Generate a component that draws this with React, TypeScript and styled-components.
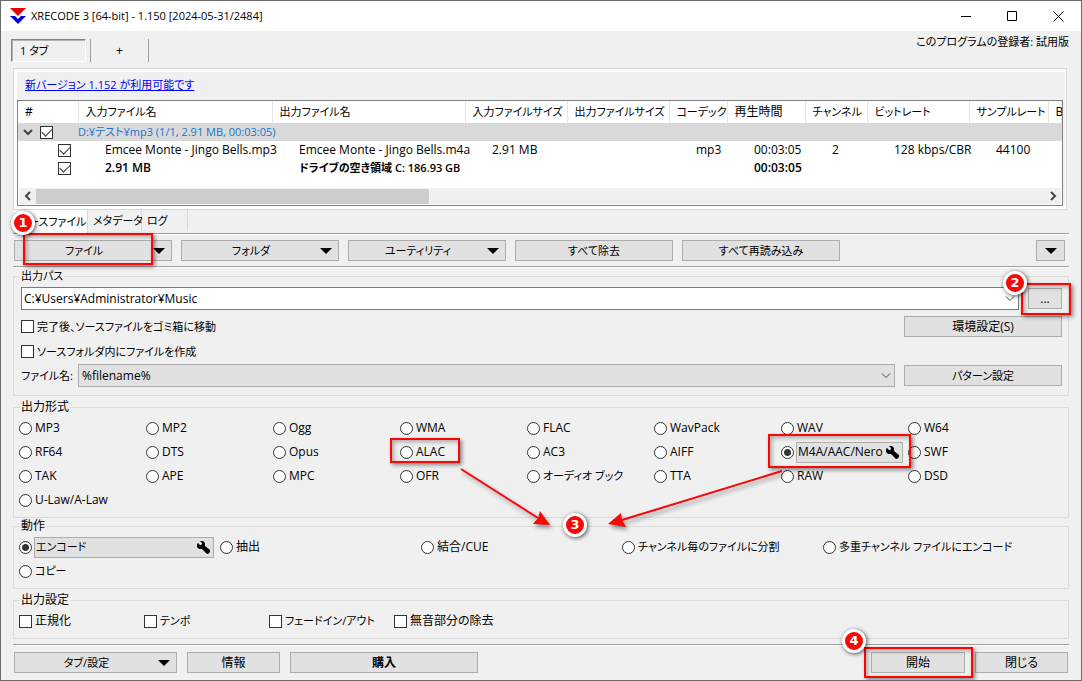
import React from 'react';
import styled, { createGlobalStyle, css } from 'styled-components';

const GlobalStyle = createGlobalStyle`
  * { box-sizing: border-box; }
  body {
    margin: 0;
    background: #f0f0f0;
    color: #000;
    font: 12px/16px "Open Sans", "Noto Sans CJK JP", sans-serif;
    font-feature-settings: "palt";
  }
  button, input, select { font: inherit; font-feature-settings: inherit; color: inherit; }
`;

const Window = styled.div`
  position: relative;
  display: flex;
  flex-direction: column;
  min-height: 100vh;
  border: 1px solid #6b6b6b;
  background: #f0f0f0;
  white-space: nowrap;
  overflow: hidden;
`;

const TitleBar = styled.header`
  display: flex;
  align-items: center;
  height: 30px;
  padding-left: 9px;
  background: #fff;
`;

const Title = styled.h1`
  flex: 1;
  margin: 0 0 0 5px;
  font-size: 11px;
  font-weight: 400;
`;

const CaptionButton = styled.button`
  display: grid;
  place-items: center;
  width: 46px;
  height: 30px;
  padding: 0;
  border: 0;
  background: none;
`;

const Compact = styled.span`
  font-size: 11px;
`;

const TabRow = styled.div`
  display: flex;
  align-items: flex-start;
  height: 37px;
  padding: 0 12px 0 10px;
`;

const TopTab = styled.button<{ $active?: boolean }>`
  width: ${p => (p.$active ? 75 : 59)}px;
  height: 23px;
  margin-top: 8px;
  padding: 0 8px;
  background: none;
  ${p => p.$active
    ? css`
        margin-right: 4px;
        text-align: left;
        border: 1px solid;
        border-color: #828282 #fff #fff #828282;
        box-shadow: inset 1px 1px #b4b4b4;
      `
    : css`
        border: solid #a0a0a0;
        border-width: 0 1px;
      `}
`;

const Registration = styled.span`
  margin: 3px 0 0 auto;
`;

const Panel = styled.section`
  margin: 0 14px 0 12px;
  padding: 3px 1px 3px 3px;
  border: 1px solid #d9d9d9;
  background: #fff;
`;

const PanelInner = styled.div`
  padding-right: 2px;
  background: #f0f0f0;
`;

const Notice = styled.div`
  height: 28px;
  padding: 5px 8px 0;
  a { color: #00f; }
`;

const ListBox = styled.div`
  height: 106px;
  border: 1px solid #828282;
  background: #fff;
  display: flex;
  flex-direction: column;
  justify-content: space-between;
  overflow: hidden;
`;

const Table = styled.table`
  width: 100%;
  table-layout: fixed;
  border-collapse: collapse;
  th, td {
    padding: 0;
    text-align: left;
    font-weight: inherit;
  }
  th {
    height: 22px;
    padding-left: 7px;
    border-right: 1px solid #e5e5e5;
  }
  td { height: 18px; padding-left: 27px; }
`;

const FileRow = styled.tr<{ $folder?: boolean; $total?: boolean }>`
  font-weight: ${p => (p.$total ? 600 : 400)};
  ${p => p.$folder && css`
    background: #d9d9d9;
    color: #1874cd;
  `}
  td:first-child { padding-left: 0; }
  ${p => p.$folder && css`td { padding-left: 0; }`}
`;

const CheckCell = styled.div<{ $indent?: boolean }>`
  display: flex;
  align-items: center;
  gap: 7px;
  padding-left: ${p => (p.$indent ? 40 : 5)}px;
`;

const Scrollbar = styled.div`
  display: flex;
  align-items: center;
  height: 16px;
  margin: 0 1px 1px;
  background: #f0f0f0;
`;

const ScrollArrow = styled.span`
  display: grid;
  place-items: center;
  width: 17px;
`;

const ScrollTrack = styled.div`
  flex: 1;
  height: 15px;
`;

const ScrollThumb = styled.div`
  width: 39%;
  height: 15px;
  background: #cdcdcd;
`;

const SheetTabs = styled.div`
  display: flex;
  align-items: flex-start;
  height: 23px;
  padding-left: 13px;
`;

const SheetTab = styled.button<{ $active?: boolean; $w: number }>`
  width: ${p => p.$w}px;
  height: ${p => (p.$active ? 23 : 21)}px;
  padding: 0 5px;
  border: solid #d9d9d9;
  border-width: 0 1px 0 0;
  background: ${p => (p.$active ? '#fff' : '#f0f0f0')};
  text-align: ${p => (p.$active ? 'right' : 'left')};
`;

const Rule = styled.hr`
  margin: 0 12px;
  border: solid;
  border-width: 1px 0;
  border-color: #a0a0a0 #fff #fff;
`;

const Bar = styled.div`
  display: flex;
  align-items: flex-start;
`;

const Toolbar = styled(Bar)`
  gap: 9px;
  height: 31px;
  padding: 5px 16px 0 13px;
`;

const BottomArea = styled.footer`
  margin-top: auto;
`;

const FooterBar = styled(Bar)`
  gap: 10px;
  padding: 6px 13px 7px;
`;

const Push = styled.div`
  margin-left: auto;
`;

const Button = styled.button<{ $w: number; $bold?: boolean }>`
  position: relative;
  display: flex;
  align-items: center;
  justify-content: center;
  width: ${p => p.$w}px;
  height: 21px;
  padding: 0;
  border: 1px solid #adadad;
  background: #e1e1e1;
  font-weight: ${p => (p.$bold ? 600 : 400)};
`;

const MenuButton = styled(Button)`
  padding-right: 18px;
`;

const Triangle = styled.i<{ $center?: boolean }>`
  border: solid transparent;
  border-width: 6px 6px 0;
  border-top-color: #000;
  ${p => !p.$center && css`
    position: absolute;
    right: 6px;
    top: 7px;
  `}
`;

const Group = styled.fieldset`
  position: relative;
  min-width: 0;
  margin: 0 12px;
  padding: 0 5px 5px;
  border: 1px solid #dcdcdc;
`;

const SpacedGroup = styled(Group)`
  margin-top: 3px;
`;

const Legend = styled.legend`
  height: 17px;
  margin-left: 1px;
  padding: 0 1px;
`;

const FormRow = styled.div<{ $top: number; $tall?: boolean }>`
  display: flex;
  align-items: center;
  justify-content: space-between;
  gap: 9px;
  height: ${p => (p.$tall ? 23 : 21)}px;
  margin: ${p => p.$top}px 0 0 2px;
`;

const FieldLabel = styled.label`
  width: 48px;
`;

const PathGroup = styled(Group)`
  padding-bottom: 8px;
`;

const ComboBox = styled.div`
  position: relative;
  flex: 1;
  display: flex;
  height: 23px;
`;

const PathInput = styled.input`
  flex: 1;
  height: 23px;
  padding: 0 24px 1px 2px;
  border: 1px solid #7a7a7a;
  background: #fff;
`;

const PatternSelect = styled.select`
  flex: 1;
  height: 23px;
  padding: 0 24px 0 3px;
  border: 1px solid #adadad;
  border-radius: 0;
  background: #e1e1e1;
  appearance: none;
`;

const ComboArrow = styled.svg`
  position: absolute;
  right: 4px;
  top: 9px;
  pointer-events: none;
`;

const BrowseSlot = styled.div`
  position: relative;
  margin-right: 1px;
`;

const RightButton = styled(Button)`
  margin-right: 1px;
`;

const OptionGrid = styled.div<{ $cols: number; $w: number }>`
  display: grid;
  grid-template-columns: repeat(${p => p.$cols}, minmax(0, ${p => p.$w}px));
  grid-auto-rows: 24px;
`;

const OptionCell = styled.div`
  position: relative;
  display: flex;
  align-items: center;
  gap: 2px;
`;

const Option = styled.label`
  display: flex;
  align-items: center;
  gap: 3px;
`;

const Check = styled.input.attrs({ type: 'checkbox' })`
  appearance: none;
  flex: none;
  width: 13px;
  height: 13px;
  margin: 0;
  border: 1px solid #333;
  background: #fff;
  display: grid;
  place-items: center;
  &:checked::before {
    content: "";
    width: 9px;
    height: 5px;
    margin-top: -2px;
    border: solid #333;
    border-width: 0 0 1px 1px;
    rotate: -45deg;
  }
`;

const Radio = styled.input.attrs({ type: 'radio' })`
  appearance: none;
  flex: none;
  width: 13px;
  height: 13px;
  margin: 0;
  border: 1px solid #333;
  border-radius: 50%;
  background: #fff;
  &:checked { background: radial-gradient(circle, #333 3px, #fff 4px); }
`;

const ToolButton = styled.button<{ $w: number }>`
  display: flex;
  align-items: center;
  justify-content: space-between;
  width: ${p => p.$w}px;
  height: 21px;
  padding: 0 3px 0 1px;
  border: 1px solid #adadad;
  background: #e1e1e1;
`;

const Anchor = styled.div`
  position: relative;
`;

const Highlight = styled.div<{ $inset: string }>`
  position: absolute;
  inset: ${p => p.$inset};
  z-index: 2;
  border: 2px solid #fb0505;
  box-shadow: 2px 2px 4px rgba(0, 0, 0, 0.45), inset 2px 2px 4px rgba(0, 0, 0, 0.3);
  pointer-events: none;
`;

const Badge = styled.span<{ $x: number; $y: number }>`
  position: absolute;
  left: ${p => p.$x}px;
  top: ${p => p.$y}px;
  z-index: 3;
  display: grid;
  place-items: center;
  width: 24px;
  height: 24px;
  border: 3px solid #fff;
  border-radius: 50%;
  background: #fb0505;
  box-shadow: 1px 1px 4px rgba(0, 0, 0, 0.7);
  color: #fff;
  font: 700 13px/18px "DejaVu Sans", sans-serif;
`;

const Arrows = styled.svg`
  position: absolute;
  left: 0;
  top: 0;
  z-index: 2;
  overflow: visible;
  pointer-events: none;
  filter: drop-shadow(2px 3px 2px rgba(0, 0, 0, 0.4));
`;

const Wrench = () => (
  <svg width="14" height="14" viewBox="0 0 14 14" aria-hidden="true">
    <path d="M4 1h3l2 2v3l5 4v2l-2 2h-1L6 9H3L1 7V4l1-1 2 2h1l1-1V3z" fill="#000" />
  </svg>
);

const Chevron = ({ d }: { d: string }) => (
  <svg width="10" height="10" viewBox="0 0 10 10" fill="none" stroke="#444" strokeWidth="2" aria-hidden="true">
    <path d={d} />
  </svg>
);

const DownArrow = () => (
  <ComboArrow width="10" height="6" viewBox="0 0 10 6" fill="none" stroke="#444">
    <path d="M1 .5l4 4 4-4" />
  </ComboArrow>
);

const mostlyKana = /[ァ-ヺ]|[ぁ-ん].*[ぁ-ん].*[ぁ-ん]/;

const Text = ({ children }: { children: string }) =>
  mostlyKana.test(children) ? <Compact>{children}</Compact> : <span>{children}</span>;

const columns: [string, number?][] = [
  ['#', 60], ['入力ファイル名', 194], ['出力ファイル名', 193], ['入力ファイルサイズ', 102],
  ['出力ファイルサイズ', 102], ['コーデック', 58], ['再生時間', 78], ['チャンネル', 62],
  ['ビットレート', 102], ['サンプルレート', 79], ['B'],
];

const files = [
  { id: 'track', cells: ['Emcee Monte - Jingo Bells.mp3', 'Emcee Monte - Jingo Bells.m4a', '2.91 MB', '', 'mp3', '00:03:05', '2', '128 kbps/CBR', '44100', ''] },
  { id: 'total', total: true, cells: ['2.91 MB', 'ドライブの空き領域 C: 186.93 GB', '', '', '', '00:03:05', '', '', '', ''] },
];

const formats = [
  'MP3', 'MP2', 'Ogg', 'WMA', 'FLAC', 'WavPack', 'WAV', 'W64',
  'RF64', 'DTS', 'Opus', 'ALAC', 'AC3', 'AIFF', 'M4A/AAC/Nero', 'SWF',
  'TAK', 'APE', 'MPC', 'OFR', 'オーディオ ブック', 'TTA', 'RAW', 'DSD', 'U-Law/A-Law',
];

const actions = ['エンコード', '抽出', '結合/CUE', 'チャンネル毎のファイルに分割', '多重チャンネル ファイルにエンコード', 'コピー'];
const effects = ['正規化', 'テンポ', 'フェードイン/アウト', '無音部分の除去'];

function FileTable() {
  return (
    <Table>
      <colgroup>
        {columns.map(([name, w]) => <col key={name} width={w} />)}
      </colgroup>
      <thead>
        <tr>{columns.map(([name]) => <th key={name} scope="col"><Text>{name}</Text></th>)}</tr>
      </thead>
      <tbody>
        <FileRow $folder>
          <td>
            <CheckCell>
              <Chevron d="M1 3l4 4 4-4" />
              <Check defaultChecked aria-label="D:¥テスト¥mp3" />
            </CheckCell>
          </td>
          <td colSpan={10}><Text>D:¥テスト¥mp3 (1/1, 2.91 MB, 00:03:05)</Text></td>
        </FileRow>
        {files.map(f => (
          <FileRow key={f.id} $total={f.total}>
            <td><CheckCell $indent><Check defaultChecked aria-label={f.cells[0]} /></CheckCell></td>
            {f.cells.map((c, i) => <td key={i}><Text>{c}</Text></td>)}
          </FileRow>
        ))}
      </tbody>
    </Table>
  );
}

export default function App() {
  return (
    <Window>
      <GlobalStyle />
      <TitleBar>
        <svg width="16" height="16" viewBox="0 0 16 16" aria-hidden="true">
          <path d="M0 0h16L8 8z" fill="#e60000" />
          <path d="M0 8h5l3 3 3-3h5l-8 8z" fill="#0000e0" />
        </svg>
        <Title>XRECODE 3 [64-bit] - 1.150 [2024-05-31/2484]</Title>
        <CaptionButton aria-label="最小化">
          <svg width="11" height="11" stroke="#000" fill="none"><path d="M0 5.500h10" /></svg>
        </CaptionButton>
        <CaptionButton aria-label="最大化">
          <svg width="11" height="11" stroke="#000" fill="none"><path d="M.5.5h9v9h-9z" /></svg>
        </CaptionButton>
        <CaptionButton aria-label="ウィンドウを閉じる">
          <svg width="11" height="11" stroke="#000" fill="none"><path d="M.5.5l10 10M10.500.5l-10 10" /></svg>
        </CaptionButton>
      </TitleBar>

      <TabRow>
        <TopTab $active><Text>1 タブ</Text></TopTab>
        <TopTab>+</TopTab>
        <Registration><Text>このプログラムの登録者: 試用版</Text></Registration>
      </TabRow>

      <Panel>
        <PanelInner>
          <Notice><a href="#update"><Text>新バージョン 1.152 が利用可能です</Text></a></Notice>
          <ListBox>
            <FileTable />
            <Scrollbar>
              <ScrollArrow><Chevron d="M7 1L3 5l4 4" /></ScrollArrow>
              <ScrollTrack><ScrollThumb /></ScrollTrack>
              <ScrollArrow><Chevron d="M3 1l4 4-4 4" /></ScrollArrow>
            </Scrollbar>
          </ListBox>
        </PanelInner>
      </Panel>

      <SheetTabs>
        <SheetTab $active $w={74}><Text>ソースファイル</Text></SheetTab>
        <SheetTab $w={54}><Text>メタデータ</Text></SheetTab>
        <SheetTab $w={46}><Text>ログ</Text></SheetTab>
      </SheetTabs>
      <Rule />

      <Toolbar>
        <Anchor>
          <MenuButton $w={158}><Text>ファイル</Text><Triangle /></MenuButton>
          <Highlight $inset="-7px 19px -4px 9px" />
          <Badge $x={-3} $y={-29}>1</Badge>
        </Anchor>
        <MenuButton $w={158}><Text>フォルダ</Text><Triangle /></MenuButton>
        <MenuButton $w={158}><Text>ユーティリティ</Text><Triangle /></MenuButton>
        <Button $w={158}><Text>すべて除去</Text></Button>
        <Button $w={158}><Text>すべて再読み込み</Text></Button>
        <Push><Button $w={29} aria-label="その他"><Triangle $center /></Button></Push>
      </Toolbar>
      <Rule />

      <PathGroup>
        <Legend><Text>出力パス</Text></Legend>
        <FormRow $top={2} $tall>
          <ComboBox>
            <PathInput aria-label="出力パス" defaultValue="C:¥Users¥Administrator¥Music" />
            <DownArrow />
          </ComboBox>
          <BrowseSlot>
            <Button $w={34}>...</Button>
            <Highlight $inset="-5px -9px -6px -7px" />
            <Badge $x={-25} $y={-17}>2</Badge>
          </BrowseSlot>
        </FormRow>
        <FormRow $top={6}>
          <Option><Check /><Text>完了後、ソースファイルをゴミ箱に移動</Text></Option>
          <RightButton $w={158}>環境設定(S)</RightButton>
        </FormRow>
        <FormRow $top={4}>
          <Option><Check /><Text>ソースフォルダ内にファイルを作成</Text></Option>
        </FormRow>
        <FormRow $top={2} $tall>
          <FieldLabel htmlFor="pattern"><Text>ファイル名:</Text></FieldLabel>
          <ComboBox>
            <PatternSelect id="pattern"><option>%filename%</option></PatternSelect>
            <DownArrow />
          </ComboBox>
          <RightButton $w={158}><Text>パターン設定</Text></RightButton>
        </FormRow>
      </PathGroup>

      <SpacedGroup>
        <Legend>出力形式</Legend>
        <OptionGrid $cols={8} $w={127}>
          {formats.map(name => (
            <OptionCell key={name}>
              {name === 'M4A/AAC/Nero' ? (
                <>
                  <Radio name="format" defaultChecked aria-label={name} />
                  <ToolButton $w={107}>{name}<Wrench /></ToolButton>
                  <Highlight $inset="-6px -3px -4px -13px" />
                </>
              ) : (
                <Option><Radio name="format" /><Text>{name}</Text></Option>
              )}
              {name === 'ALAC' && <Highlight $inset="-2px 67px 1px -10px" />}
            </OptionCell>
          ))}
        </OptionGrid>
        <Arrows width="1" height="1">
          <g fill="#fb0505">
            <path d="M447 53l77 49M768 55L608 104" stroke="#fb0505" strokeWidth="2" />
            <path d="M536 109L526 95 524 102 519 108zM594 108L607 97 608 104 612 111z" />
          </g>
        </Arrows>
        <Badge $x={549} $y={97}>3</Badge>
      </SpacedGroup>

      <Group>
        <Legend>動作</Legend>
        <OptionGrid $cols={5} $w={201}>
          {actions.map(name => (
            <OptionCell key={name}>
              {name === 'エンコード' ? (
                <>
                  <Radio name="action" defaultChecked aria-label={name} />
                  <ToolButton $w={180}><Text>{name}</Text><Wrench /></ToolButton>
                </>
              ) : (
                <Option><Radio name="action" /><Text>{name}</Text></Option>
              )}
            </OptionCell>
          ))}
        </OptionGrid>
      </Group>

      <SpacedGroup>
        <Legend>出力設定</Legend>
        <OptionGrid $cols={8} $w={125}>
          {effects.map(name => (
            <OptionCell key={name}><Option><Check /><Text>{name}</Text></Option></OptionCell>
          ))}
        </OptionGrid>
      </SpacedGroup>

      <BottomArea>
        <Rule />
        <FooterBar>
          <MenuButton $w={163}><Text>タブ/設定</Text><Triangle /></MenuButton>
          <Button $w={93}>情報</Button>
          <Button $w={188} $bold>購入</Button>
          <Push>
            <Anchor>
              <Button $w={94}>開始</Button>
              <Highlight $inset="-5px -8px -5px -7px" />
              <Badge $x={-29} $y={-23}>4</Badge>
            </Anchor>
          </Push>
          <Button $w={93}>閉じる</Button>
        </FooterBar>
      </BottomArea>
    </Window>
  );
}
